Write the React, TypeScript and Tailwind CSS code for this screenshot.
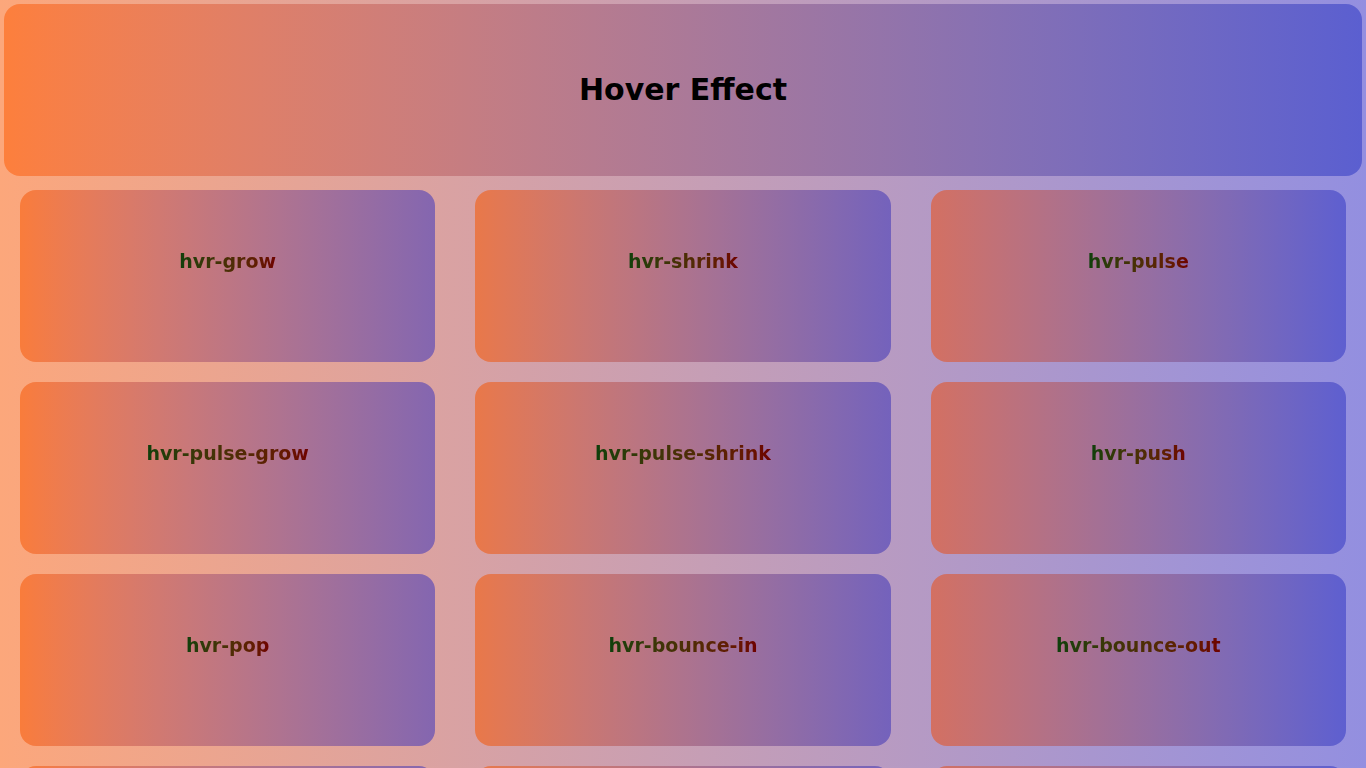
const effects = [
  "hvr-grow",
  "hvr-shrink",
  "hvr-pulse",
  "hvr-pulse-grow",
  "hvr-pulse-shrink",
  "hvr-push",
  "hvr-pop",
  "hvr-bounce-in",
  "hvr-bounce-out",
  "hvr-rotate",
  "hvr-grow-rotate",
  "hvr-float",
  "hvr-sink",
  "hvr-bob",
  "hvr-hang",
];

// each column sits over a different part of the page gradient
const columnBg = [
  "bg-gradient-to-r from-[#f97c3b] to-[#8466b0]",
  "bg-gradient-to-r from-[#e97849] to-[#7462bc]",
  "bg-gradient-to-r from-[#d37062] to-[#5e5fd0]",
];

export default function App() {
  return (
    <div className="min-h-screen bg-gradient-to-r from-[#fca77b] to-[#938fe0] p-1 font-['DejaVu_Sans',sans-serif]">
      {/* header */}
      <div className="h-[172px] rounded-2xl bg-gradient-to-r from-[#fd7f3c] to-[#5b5fd0] flex items-center justify-center">
        <h1 className="text-[30px] leading-9 font-bold text-black">Hover Effect</h1>
      </div>

      {/* cards */}
      <div className="grid grid-cols-3 gap-x-[40px] gap-y-[20px] px-4 mt-[14px] pb-5">
        {effects.map((name, i) => (
          <div
            key={name}
            className={`${columnBg[i % 3]} h-[172px] rounded-2xl flex justify-center pt-[60px] cursor-pointer`}
          >
            <span className="h-fit text-[19px] leading-[22px] font-bold bg-gradient-to-r from-[#0b3f0b] to-[#6e0000] bg-clip-text text-transparent">
              {name}
            </span>
          </div>
        ))}
      </div>
    </div>
  );
}
